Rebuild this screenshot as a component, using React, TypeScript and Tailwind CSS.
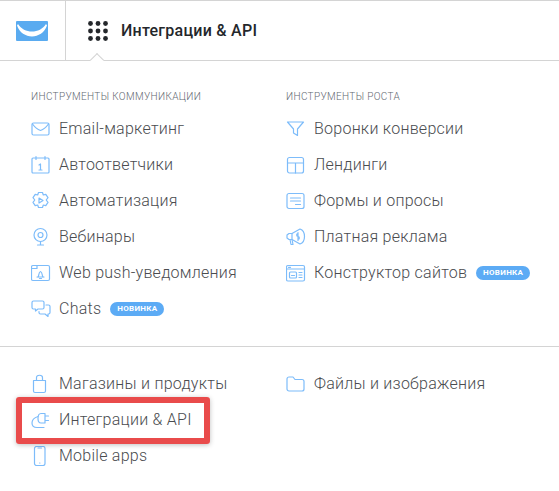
import React from "react";

const S = (p: { children: React.ReactNode }) => (
  <svg width={20} height={20} viewBox="0 0 20 20" fill="none" stroke="#7dbcfa" strokeWidth={1.2} strokeLinecap="round" strokeLinejoin="round" className="shrink-0">
    {p.children}
  </svg>
);

const icons: Record<string, React.ReactNode> = {
  mail: <S><rect x="1" y="4" width="17" height="12" rx="1.500" /><path d="M1.500 5c2.500 3.500 5 5.500 8 6.500 3-1 5.500-3 8-6.500" /></S>,
  cal: <S><rect x="1" y="3" width="17" height="15" rx="1" /><path d="M5 1.500v3M14 1.500v3M8 10l1.500-1v6M8 15h3" /></S>,
  gear: <S><path d="M7.500 1.500h4l.8 2.500 2.500-.6 2.200 3.300-1.800 2.300 1.800 2.300-2.200 3.300-2.500-.6-.8 2.500h-4l-.8-2.500-2.500.6-2.200-3.300 1.800-2.300-1.800-2.300 2.200-3.300 2.500.6z" /><path d="M8 7l4 2.500-4 2.500z" /></S>,
  cam: <S><circle cx="9.500" cy="8" r="6.500" /><circle cx="9.500" cy="8" r="2.500" /><path d="M9.500 14.500v3M6.500 18h6" /></S>,
  push: <S><rect x="0.500" y="2.500" width="18" height="15" rx="1.500" /><path d="M0.500 5.500h5.500V2.500M6 14h7M7 14c1-1 .5-5 2.500-5.500 2 .5 1.500 4.500 2.500 5.500M8.500 15.500h2" /></S>,
  chat: <S><path d="M2.500 2h9a1.500 1.500 0 0 1 1.500 1.500v5a1.500 1.500 0 0 1-1.500 1.500H7l-2.500 2v-2h-2A1.500 1.500 0 0 1 1 8.500v-5A1.500 1.500 0 0 1 2.500 2z" /><path d="M15 6h2.500A1.500 1.500 0 0 1 19 7.500v6a1.500 1.500 0 0 1-1.500 1.500H17v2.500L14 15H9.500A1.500 1.500 0 0 1 8 13.500v-1" /></S>,
  funnel: <S><path d="M1.500 3h16l-6 7v6.500l-4-2.500v-4z" /></S>,
  land: <S><rect x="1.500" y="2.500" width="16" height="15.500" rx="2" /><path d="M1.500 8h16M9.500 8v10" /></S>,
  form: <S><rect x="1" y="2.500" width="17" height="15" rx="2" /><path d="M4.500 7h10M4.500 10h10M9.500 13.500h5" /></S>,
  ads: <S><path d="M6 6.500l8-4.500c3 1 4.500 4 4.500 7.500s-1.500 6.500-4.500 7.500l-8-4.500z" /><path d="M6 6.500H3L1 8v3l2 1.500h3M4 12.500l1 5h2l-1-5M12 6.500c-1.800 0-1.800 3 0 3s1.800 3 0 3M12 5.500v8" /></S>,
  site: <S><rect x="0.500" y="2.500" width="18" height="15.500" rx="1.500" /><path d="M0.500 6h18M2.500 4.300h2" /><rect x="3.500" y="9" width="7" height="6" rx="1" /><path d="M5.500 12.500h3M13 9.500h3M13 12h3M13 14.500h3" /></S>,
  bag: <S><path d="M2.500 6.500h12v10.500a1.500 1.500 0 0 1-1.500 1.500H4A1.500 1.500 0 0 1 2.500 17z" /><path d="M5.500 6.500V3.500c0-3 6-3 6 0v3" /></S>,
  plug: <S><path d="M14 3.500h-4C8 3.500 7 5.500 7 8.500s1 4.500 3 4.500h4zM14 6h3.500M14 10.500h3.500" /><path d="M7 6.500C3.500 7.500 1 10 1 13c0 3 2 4.500 5 4.500h7" /></S>,
  phone: <S><rect x="3.500" y="0.500" width="10.500" height="19" rx="2" /><path d="M7 2h3.500M8.700 17h.2" /></S>,
  folder: <S><path d="M1 5a2 2 0 0 1 2-2h4l2 2.500h7a2 2 0 0 1 2 2V15a2 2 0 0 1-2 2H3a2 2 0 0 1-2-2z" /></S>,
};

function Row({ icon, label, badge }: { icon: string; label: string; badge?: boolean }) {
  return (
    <div className="flex h-9 items-center">
      <span className="flex w-7 items-center">{icons[icon]}</span>
      <span className="text-[16px] font-light tracking-[0.25px] text-[#4a4c4f]">{label}</span>
      {badge && (
        <span className="ml-[9px] flex h-[14px] items-center rounded-full bg-[#5cabf5] px-[7px] text-[8px] font-bold tracking-[0.3px] text-white">НОВИНКА</span>
      )}
    </div>
  );
}

function Heading({ children }: { children: React.ReactNode }) {
  return <div className="mb-[7px] text-[10px] font-light leading-[14px] tracking-[0.35px] text-[#5f6870]">{children}</div>;
}

export default function App() {
  return (
    <div className="relative h-[491px] w-[559px] overflow-hidden bg-white font-['Roboto',sans-serif]">
      <header className="relative flex h-[61px] border-y border-[#d4d4d4]">
        <div className="flex w-[66px] items-center justify-center border-r border-[#d4d4d4] pr-[2px]">
          <svg width="32" height="20" viewBox="0 0 32 20">
            <rect width="32" height="20" rx="1" fill="#5aabf0" />
            <path d="M2 3C8 13 24 13 30 3L31 4.500C26 19 6 19 1 4.500Z" fill="#fff" />
          </svg>
        </div>
        <div className="flex items-center pl-[22px]">
          <svg width="20" height="20" viewBox="0 0 20 20" fill="#24272b">
            {[2.5, 10, 17.5].flatMap((y) => [2.5, 10, 17.5].map((x) => <circle key={`${x}-${y}`} cx={x} cy={y} r="2.400" />))}
          </svg>
          <span className="ml-[13px] text-[16px] font-medium leading-none tracking-[0.25px] text-[#24272b]">Интеграции &amp; API</span>
        </div>
        <span className="absolute bottom-[-5px] left-[92px] size-[10px] rotate-45 border-l border-t border-[#d4d4d4] bg-white" />
      </header>

      <section className="grid grid-cols-[255px_1fr] border-b border-[#d4d4d4] pb-[19px] pl-[31px] pt-[29px]">
        <div>
          <Heading>ИНСТРУМЕНТЫ КОММУНИКАЦИИ</Heading>
          <Row icon="mail" label="Email-маркетинг" />
          <Row icon="cal" label="Автоответчики" />
          <Row icon="gear" label="Автоматизация" />
          <Row icon="cam" label="Вебинары" />
          <Row icon="push" label="Web push-уведомления" />
          <Row icon="chat" label="Chats" badge />
        </div>
        <div>
          <Heading>ИНСТРУМЕНТЫ РОСТА</Heading>
          <Row icon="funnel" label="Воронки конверсии" />
          <Row icon="land" label="Лендинги" />
          <Row icon="form" label="Формы и опросы" />
          <Row icon="ads" label="Платная реклама" />
          <Row icon="site" label="Конструктор сайтов" badge />
        </div>
      </section>

      <section className="grid grid-cols-[255px_1fr] pl-[31px] pt-[19px]">
        <div>
          <Row icon="bag" label="Магазины и продукты" />
          <Row icon="plug" label="Интеграции & API" />
          <Row icon="phone" label="Mobile apps" />
        </div>
        <div>
          <Row icon="folder" label="Файлы и изображения" />
        </div>
      </section>

      <div className="absolute left-[16px] top-[397px] h-[47px] w-[194px] rounded-[3px] border-[6px] border-[#e94b4b] shadow-[0_1px_5px_rgba(0,0,0,0.25)]" />
    </div>
  );
}
